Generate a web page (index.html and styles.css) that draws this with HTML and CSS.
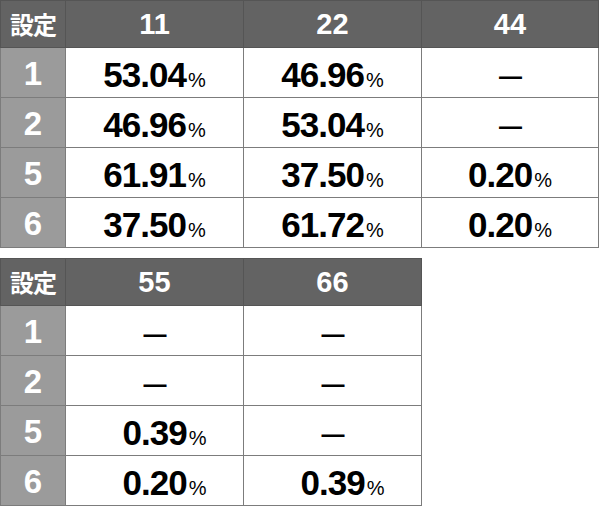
FILE: index.html
```html
<!DOCTYPE html>
<html lang="ja">
<head>
<meta charset="utf-8">
<link rel="stylesheet" href="styles.css">
</head>
<body>
<div class="page">
  <table class="grid wide">
    <colgroup><col class="c-set"><col class="c-val"><col class="c-val"><col class="c-last"></colgroup>
    <thead>
      <tr><th class="set-h">設定</th><th>11</th><th>22</th><th>44</th></tr>
    </thead>
    <tbody>
      <tr><th class="set">1</th><td>53.04<span class="pct">%</span></td><td>46.96<span class="pct">%</span></td><td><span class="dash">—</span></td></tr>
      <tr><th class="set">2</th><td>46.96<span class="pct">%</span></td><td>53.04<span class="pct">%</span></td><td><span class="dash">—</span></td></tr>
      <tr><th class="set">5</th><td>61.91<span class="pct">%</span></td><td>37.50<span class="pct">%</span></td><td>0.20<span class="pct">%</span></td></tr>
      <tr><th class="set">6</th><td>37.50<span class="pct">%</span></td><td>61.72<span class="pct">%</span></td><td>0.20<span class="pct">%</span></td></tr>
    </tbody>
  </table>
  <table class="grid narrow">
    <colgroup><col class="c-set"><col class="c-val"><col class="c-val"></colgroup>
    <thead>
      <tr><th class="set-h">設定</th><th>55</th><th>66</th></tr>
    </thead>
    <tbody>
      <tr><th class="set">1</th><td><span class="dash">—</span></td><td><span class="dash">—</span></td></tr>
      <tr><th class="set">2</th><td><span class="dash">—</span></td><td><span class="dash">—</span></td></tr>
      <tr><th class="set">5</th><td class="num">0.39<span class="pct">%</span></td><td><span class="dash">—</span></td></tr>
      <tr><th class="set">6</th><td class="num">0.20<span class="pct">%</span></td><td class="num">0.39<span class="pct">%</span></td></tr>
    </tbody>
  </table>
</div>
</body>
</html>
```

FILE: styles.css
```css
html, body {
  margin: 0;
  padding: 0;
  background: #ffffff;
}

.page {
  display: flex;
  flex-direction: column;
  gap: 10px;
  font-family: "Liberation Sans", Arial, "Noto Sans CJK JP", sans-serif;
}

.grid {
  border-collapse: collapse;
  table-layout: fixed;
}

.wide { width: 598px; }
.narrow { width: 422px; }

.c-set { width: 65px; }
.c-val { width: 178px; }
.c-last { width: 177px; }

.grid th,
.grid td {
  border: 1px solid #7c7c7c;
  padding: 0;
  text-align: center;
  vertical-align: middle;
}

.grid thead th {
  background: #636363;
  color: #ffffff;
  font-size: 29px;
  font-weight: bold;
  height: 46px;
  border-color: #555555;
  line-height: 1;
}

.grid thead th.set-h {
  font-family: "Noto Sans CJK JP", sans-serif;
  font-size: 24px;
  font-weight: 700;
  letter-spacing: -1px;
}

.grid tbody th.set {
  background: #9b9b9b;
  color: #ffffff;
  font-size: 33px;
  font-weight: bold;
  height: 47px;
  line-height: 1;
  padding-top: 2px;
}

.grid td {
  background: #ffffff;
  color: #000000;
  font-size: 35px;
  font-weight: bold;
  line-height: 1;
  letter-spacing: -1px;
  padding-top: 4px;
}

.grid td.num {
  padding-left: 20px;
}

.pct {
  font-size: 20px;
  font-weight: normal;
  letter-spacing: 0;
  margin-left: 2px;
}

.dash {
  display: inline-block;
  font-size: 23px;
  font-weight: bold;
  position: relative;
  top: -3px;
}
```
